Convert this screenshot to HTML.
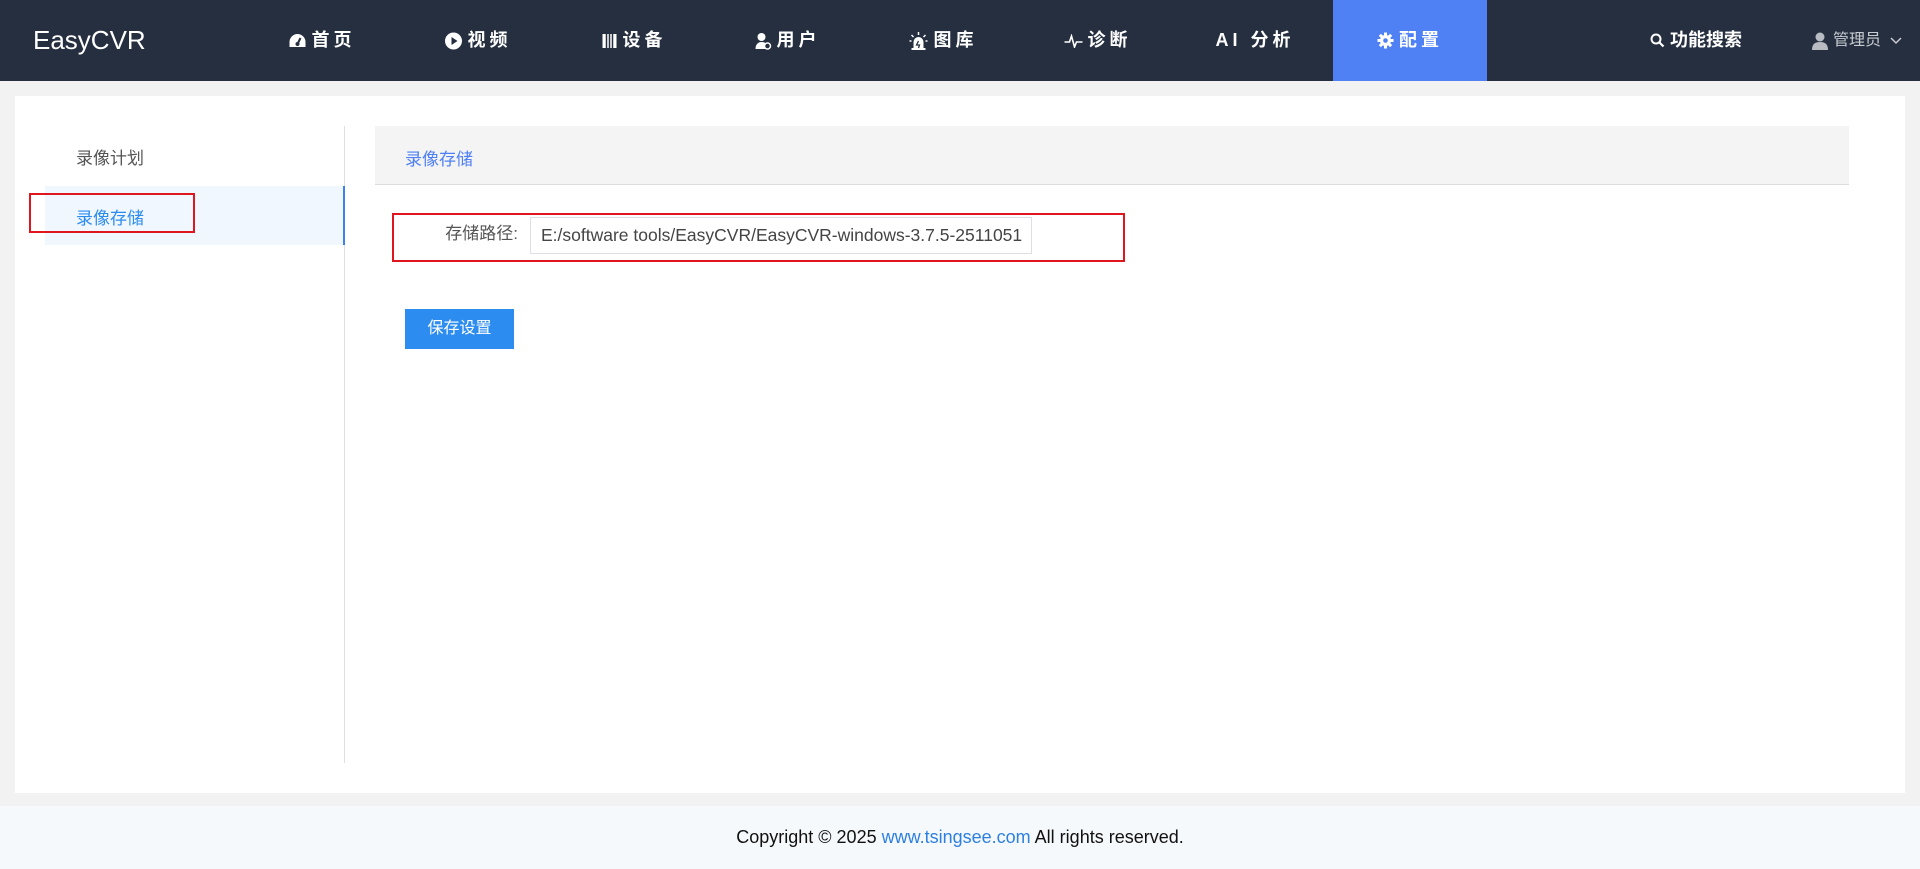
<!DOCTYPE html>
<html><head><meta charset="utf-8"><style>
*{margin:0;padding:0;box-sizing:border-box}
body{width:1920px;height:869px;background:#f2f2f2;font-family:"Liberation Sans","Noto Sans CJK SC",sans-serif;position:relative;overflow:hidden}
.nav{position:absolute;left:0;top:0;width:1920px;height:81px;background:#252f3f}
.logo{position:absolute;left:33px;top:25px;color:#fff;font-size:26px;font-family:"Liberation Sans","Noto Sans CJK SC",sans-serif}
.it{position:absolute;top:0;height:81px;line-height:81px;color:#fff;font-weight:bold;font-size:18px;letter-spacing:4px;transform:translateX(-50%);white-space:nowrap;display:flex;align-items:center;gap:5px}
.it svg{display:block}
.act{position:absolute;left:1333px;top:0;width:154px;height:81px;background:#4f80f4}
.panel{position:absolute;left:15px;top:96px;width:1890px;height:697px;background:#fff}
.foot{position:absolute;left:0;top:806px;width:1920px;height:63px;background:#f6f9fc;text-align:center;line-height:63px;font-size:18px;color:#111}
.foot a{color:#2d7fe0;text-decoration:none}
</style></head><body>
<div class="nav">
<div class="logo">EasyCVR</div>
<div class="act"></div>
<div class="it" style="left:322px"><svg width="18" height="16" viewBox="0 0 18 16"><path d="M9 1A8 8 0 0 0 1 9v5h16V9A8 8 0 0 0 9 1z" fill="#fff"/><path d="M9 11L12 5" stroke="#252f3f" stroke-width="2"/><circle cx="9" cy="11" r="2" fill="#252f3f"/></svg>首页</div>
<div class="it" style="left:478px"><svg width="18" height="18" viewBox="0 0 18 18"><circle cx="9" cy="9" r="8.5" fill="#fff"/><path d="M7 5l6 4-6 4z" fill="#252f3f"/></svg>视频</div>
<div class="it" style="left:634px"><svg width="16" height="16" viewBox="0 0 16 16"><rect x="1" y="1" width="14" height="14" fill="#fff"/><path d="M5 1v14M8 1v14M11 1v14" stroke="#252f3f" stroke-width="1.5"/></svg>设备</div>
<div class="it" style="left:787px"><svg width="18" height="18" viewBox="0 0 18 18"><circle cx="8" cy="5" r="4" fill="#fff"/><path d="M2 17c0-5 3-7 6-7s4 1 5 2v5z" fill="#fff"/><circle cx="14" cy="14" r="3" fill="#252f3f" stroke="#fff" stroke-width="1.5"/></svg>用户</div>
<div class="it" style="left:943px"><svg width="20" height="20" viewBox="0 0 20 20"><path d="M5 18V11a5 5 0 0 1 10 0v7z" fill="#fff"/><rect x="3" y="17" width="14" height="2" fill="#fff"/><path d="M10 1v3M3 4l2 2M17 4l-2 2M1 10h2M17 10h2" stroke="#fff" stroke-width="1.5"/><path d="M10 10l-2 4h3l-1 3" stroke="#252f3f" stroke-width="1.3" fill="none"/></svg>图库</div>
<div class="it" style="left:1098px"><svg width="18" height="14" viewBox="0 0 18 14"><path d="M0 8h5l2-6 3 11 2-5h6" stroke="#fff" stroke-width="1.6" fill="none"/></svg>诊断</div>
<div class="it" style="left:1255px">AI 分析</div>
<div class="it" style="left:1410px"><svg width="17" height="17" viewBox="0 0 17 17"><g fill="#fff"><circle cx="8.5" cy="8.5" r="5.5"/><rect x="7" y="0.5" width="3" height="16"/><rect x="0.5" y="7" width="16" height="3"/><rect x="7" y="0.5" width="3" height="16" transform="rotate(45 8.5 8.5)"/><rect x="7" y="0.5" width="3" height="16" transform="rotate(-45 8.5 8.5)"/></g><circle cx="8.5" cy="8.5" r="2.3" fill="#4f80f4"/></svg>配置</div>
<div class="it" style="left:1696px;letter-spacing:0"><svg width="15" height="15" viewBox="0 0 15 15"><circle cx="6" cy="6" r="4.5" stroke="#fff" stroke-width="2" fill="none"/><path d="M9.5 9.5l4 4" stroke="#fff" stroke-width="2.2"/></svg>功能搜索</div>
<div class="it" style="left:1857px;font-weight:normal;letter-spacing:0;font-size:16px;color:#c8ccd2"><svg width="16" height="18" viewBox="0 0 16 18"><circle cx="8" cy="5" r="4.5" fill="#b8bcc2"/><path d="M0 18c0-6 3-8 8-8s8 2 8 8z" fill="#b8bcc2"/></svg>管理员<svg width="12" height="8" viewBox="0 0 12 8" style="margin-left:4px"><path d="M1 1l5 5 5-5" stroke="#c8ccd2" stroke-width="1.5" fill="none"/></svg></div>
</div>

<div class="panel"></div>
<div style="position:absolute;left:344px;top:126px;width:1px;height:637px;background:#dcdfe6"></div>
<div style="position:absolute;left:76px;top:144px;font-size:17px;color:#555">录像计划</div>
<div style="position:absolute;left:45px;top:186px;width:300px;height:59px;background:#f0f7ff;border-right:2px solid #3b82f0"></div>
<div style="position:absolute;left:76px;top:204px;font-size:17px;color:#2d8cf0">录像存储</div>
<div style="position:absolute;left:29px;top:193px;width:166px;height:40px;border:2px solid #e0161e"></div>

<div style="position:absolute;left:375px;top:126px;width:1474px;height:59px;background:#f4f4f4;border-bottom:1px solid #ddd"></div>
<div style="position:absolute;left:405px;top:145px;font-size:17px;color:#4f80f4">录像存储</div>

<div style="position:absolute;left:392px;top:213px;width:733px;height:49px;border:2px solid #e0161e"></div>
<div style="position:absolute;left:420px;top:222px;width:98px;text-align:right;font-size:17px;color:#555;line-height:24px">存储路径:</div>
<div style="position:absolute;left:530px;top:217px;width:502px;height:37px;border:1px solid #dcdfe6;padding-left:10px;line-height:35px;font-size:17.5px;color:#444;white-space:nowrap;overflow:hidden">E:/software tools/EasyCVR/EasyCVR-windows-3.7.5-2511051</div>

<div style="position:absolute;left:405px;top:309px;width:109px;height:40px;background:#2d8cf0;color:#fff;font-size:16px;text-align:center;line-height:40px">保存设置</div>

<div class="foot">Copyright © 2025 <a>www.tsingsee.com</a> All rights reserved.</div>
</body></html>
